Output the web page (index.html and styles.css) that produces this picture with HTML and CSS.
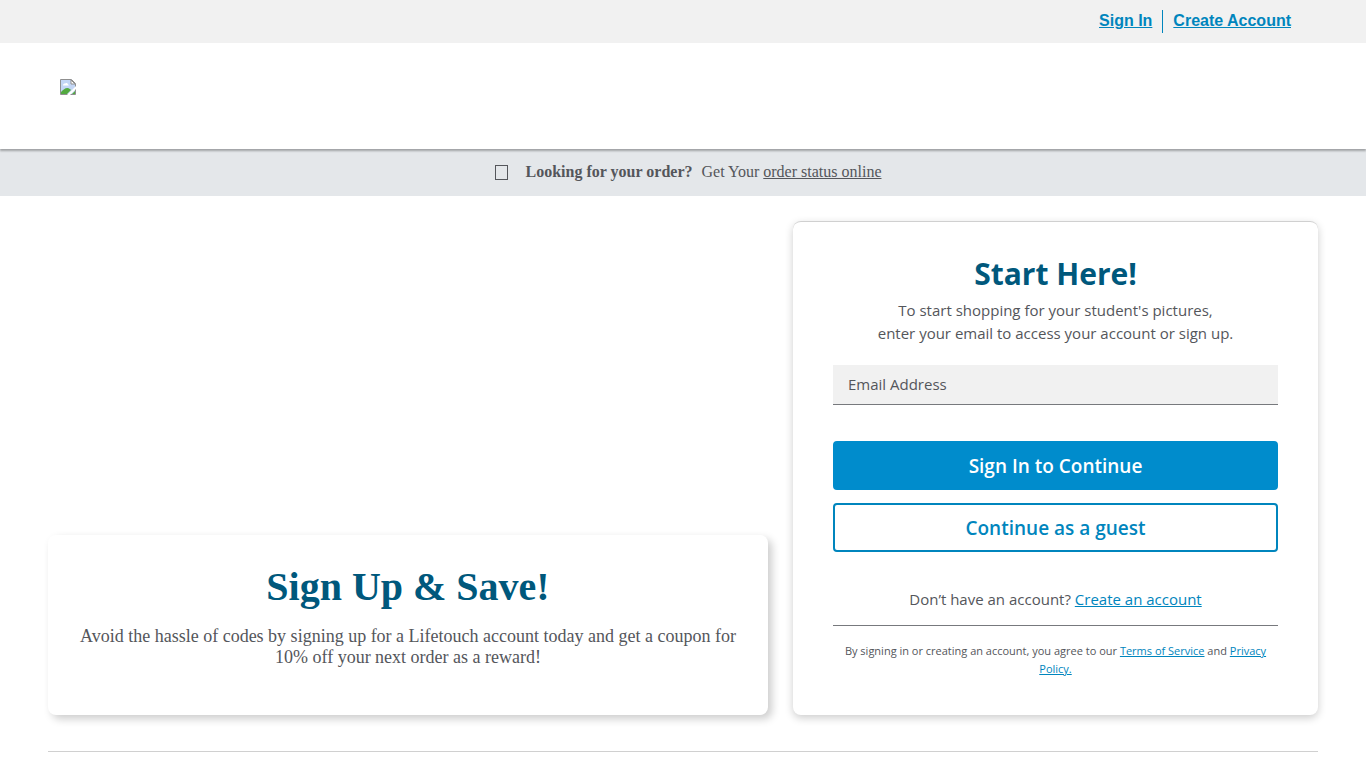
FILE: index.html
```html
<!DOCTYPE html>
<html lang="en">
<head>
    <meta charset="UTF-8">
    <meta name="viewport" content="width=device-width, initial-scale=1.0">
    <title>Lifetouch</title>
    <link rel="stylesheet" href="styles.css">
</head>
<body>
    <!-- Account links -->
    <nav class="top-bar">
        <a class="top-link" href="#">Sign In</a>
        <a class="top-link" href="#">Create Account</a>
    </nav>

    <header class="site-header">
        <a class="logo" href="#">
            <svg width="16" height="16" viewBox="0 0 16 16" aria-hidden="true">
                <path d="M0.5 0.5H11.5L15.5 4.5V15.5H0.5Z" fill="#c3d6f5" stroke="#8f8f8f"/>
                <path d="M1 1H11V5H15V7L7 15H1Z" fill="#c3d6f5"/>
                <path d="M3 6.5C3 5 4 4.500 5 4.500C6 3.500 8 4 8 5.500C9 5.500 9 6.500 8.500 6.500Z" fill="#fff"/>
                <path d="M1 15V13C3 11 5 9 7.500 9C9 9 10 10 11 11L7 15Z" fill="#53a93f"/>
                <path d="M11 1V5H15Z" fill="#fff" stroke="#8f8f8f"/>
                <path d="M7 16L16 7V10L10 16Z" fill="#fff"/>
                <path d="M12 15L15 12V15Z" fill="#53a93f"/>
            </svg>
        </a>
    </header>

    <div class="order-bar">
        <span class="order-icon"></span>
        <strong>Looking for your order?</strong>
        <span>Get Your <a href="#">order status online</a></span>
    </div>

    <main class="container">
        <div class="columns">
            <!-- Promo -->
            <section class="card promo">
                <h1 class="promo-title">Sign Up &amp; Save!</h1>
                <p class="promo-text">Avoid the hassle of codes by signing up for a Lifetouch account today and get a coupon for 10% off your next order as a reward!</p>
            </section>

            <!-- Sign in form -->
            <form class="card signin">
                <h2 class="signin-title">Start Here!</h2>
                <p class="signin-text">To start shopping for your student's pictures,<br>enter your email to access your account or sign up.</p>
                <div class="field">
                    <label for="email">Email Address</label>
                    <input type="email" id="email">
                </div>
                <div class="buttons">
                    <button class="btn btn-primary" type="submit">Sign In to Continue</button>
                    <button class="btn btn-secondary" type="button">Continue as a guest</button>
                </div>
                <p class="create">Don’t have an account? <a href="#">Create an account</a></p>
                <p class="terms">By signing in or creating an account, you agree to our <a href="#">Terms of Service</a> and <a href="#">Privacy Policy.</a></p>
            </form>
        </div>
    </main>
</body>
</html>
```

FILE: styles.css
```css
* {
    margin: 0;
    padding: 0;
    box-sizing: border-box;
}

body {
    font-family: "Liberation Serif", "Times New Roman", serif;
    font-size: 16px;
    color: #54565b;
    background: #fff;
    overflow-x: hidden;
}

a {
    color: #0085bd;
}

.top-bar {
    display: flex;
    justify-content: flex-end;
    padding: 10px 65px 10px 0;
    background: #f1f1f1;
    font-family: "Liberation Sans", Arial, sans-serif;
    font-weight: 700;
}

.top-link {
    padding: 0 10px 2px;
    line-height: 21px;
}

.top-link + .top-link {
    border-left: 1px solid #0085bd;
}

.site-header {
    position: relative;
    padding: 36px 60px 54px;
    box-shadow: 0 2px 2px rgba(0, 0, 0, 0.3);
}

.logo {
    display: block;
    width: 16px;
    height: 16px;
}

.logo svg {
    display: block;
}

.order-bar {
    display: flex;
    justify-content: center;
    align-items: center;
    gap: 9px;
    padding: 12px 0 13px 10px;
    background: #e4e7ea;
    line-height: 22px;
}

.order-bar a {
    color: inherit;
}

.order-icon {
    width: 13px;
    height: 15px;
    margin-right: 9px;
    border: 1px solid #54565b;
}

.container {
    padding: 25px 48px 0;
}

.columns {
    display: grid;
    grid-template-columns: 720fr 525fr;
    gap: 25px;
    align-items: end;
    padding-bottom: 36px;
    border-bottom: 1px solid #d0d0d0;
}

.card {
    border-radius: 8px;
    text-align: center;
}

.promo {
    padding: 28px 30px 47px;
    box-shadow: 4px 4px 8px rgba(0, 0, 0, 0.2);
}

.promo-title {
    margin-bottom: 15px;
    color: #00587c;
    font-size: 40px;
    line-height: 48px;
}

.promo-text {
    font-size: 18px;
    line-height: 21px;
}

.signin {
    padding: 32px 40px 37px;
    border-top: 1px solid #d0d0d0;
    box-shadow: 0 3px 8px rgba(0, 0, 0, 0.2);
    font-family: "Segoe UI", "Open Sans", sans-serif;
}

.signin-title {
    color: #00587c;
    font-size: 30px;
    line-height: 40px;
    margin-bottom: 5px;
}

.signin-text {
    font-size: 15px;
    line-height: 23px;
    margin-bottom: 20px;
}

.field {
    position: relative;
    margin-bottom: 36px;
}

.field label {
    position: absolute;
    left: 15px;
    top: 0;
    font-size: 15px;
    line-height: 39px;
}

.field input {
    display: block;
    width: 100%;
    height: 40px;
    padding: 0 15px;
    border: none;
    border-bottom: 1px solid #77797d;
    background: #f1f1f1;
    font: inherit;
}

.buttons {
    display: grid;
    gap: 13px;
    margin-bottom: 35px;
}

.btn {
    height: 49px;
    border: 2px solid #008ccc;
    border-radius: 4px;
    cursor: pointer;
    font-family: inherit;
    font-size: 19px;
    font-weight: 600;
}

.btn-primary {
    background: #008ccc;
    color: #fff;
}

.btn-secondary {
    background: #fff;
    border-color: #0085bd;
    color: #0085bd;
}

.create {
    padding-bottom: 14px;
    border-bottom: 1px solid #77797d;
    margin-bottom: 16px;
    font-size: 15px;
    line-height: 24px;
}

.terms {
    font-size: 11px;
    line-height: 18px;
}
```
